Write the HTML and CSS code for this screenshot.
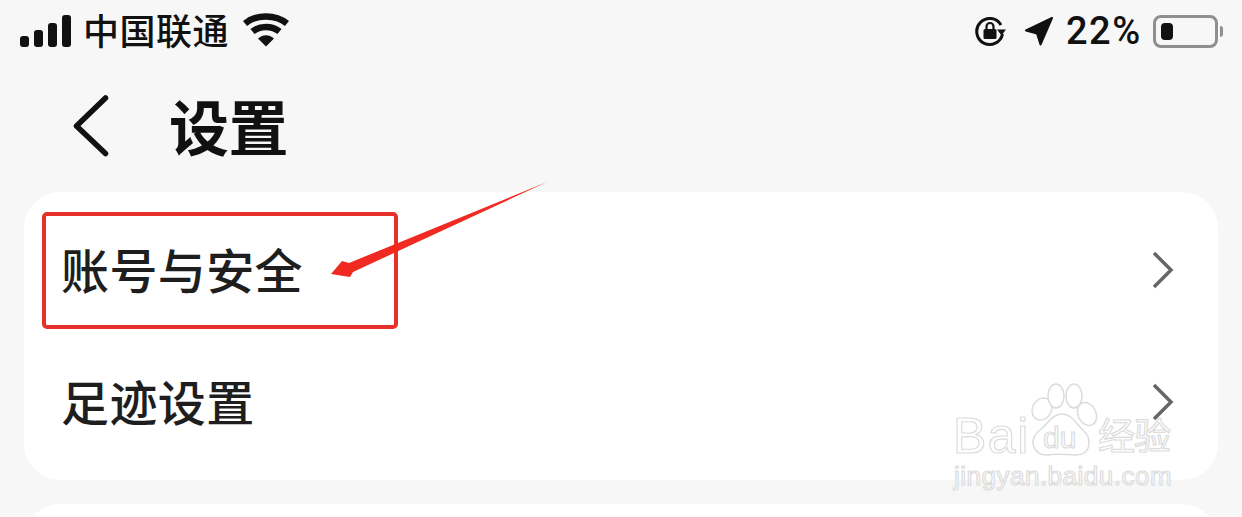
FILE: index.html
```html
<!DOCTYPE html>
<html lang="zh-CN">
<head>
<meta charset="utf-8">
<title>设置</title>
<link rel="stylesheet" href="styles.css">
</head>
<body>
<div class="screen">
  <header class="status">
    <svg class="signal" width="52" height="32" viewBox="0 0 52 32"><rect x="0" y="21" width="9" height="11" rx="3"/><rect x="14" y="15" width="9" height="17" rx="3"/><rect x="28" y="8" width="9" height="24" rx="3"/><rect x="42" y="0" width="9" height="32" rx="3"/></svg>
    <span class="carrier">中国联通</span>
    <svg class="wifi" width="46" height="34" viewBox="0 0 46 34"><path d="M2 10.500C13.500 1 32.500 1 44 10.500" fill="none" stroke="#111" stroke-width="6.500"/><path d="M9.500 18.500C17 12.500 29 12.500 36.500 18.500" fill="none" stroke="#111" stroke-width="6.500"/><path d="M15 25.500C20 21 26 21 31 25.500L23 33.500Z"/></svg>
    <span class="status-right">
      <svg class="lock" width="32" height="32" viewBox="0 0 32 32"><path d="M27 10A13 13 0 1 0 28.500 19" fill="none" stroke="#111" stroke-width="3"/><path d="M23 14.500L32 14.500L27.500 20.500Z"/><rect x="9.500" y="14" width="13" height="10" rx="1.500"/><path d="M12.500 14V11.500A3.500 3.500 0 0 1 19.500 11.500V14" fill="none" stroke="#111" stroke-width="2.200"/></svg>
      <svg class="loc" width="30" height="30" viewBox="0 0 30 30"><path d="M28 2L2 14.500L13 17.500L16.500 28.500Z" stroke="#111" stroke-width="2" stroke-linejoin="round"/></svg>
      <span class="pct">22%</span>
      <span class="battery"><span class="level"></span></span>
      <span class="nub"></span>
    </span>
  </header>
  <nav class="nav">
    <svg class="back" width="40" height="64" viewBox="0 0 40 64"><path d="M33.500 4L4.500 32L33.500 59.500" fill="none" stroke="#111" stroke-width="5.500" stroke-linecap="round" stroke-linejoin="round"/></svg>
    <h1 class="title">设置</h1>
  </nav>
  <section class="card">
    <div class="row row-first">
      <span class="label">账号与安全</span>
      <svg class="chev" width="24" height="40" viewBox="0 0 24 40"><path d="M3 3L20 20L3 37" fill="none" stroke="#666" stroke-width="3.500"/></svg>
    </div>
    <div class="row">
      <span class="label">足迹设置</span>
      <svg class="chev" width="24" height="40" viewBox="0 0 24 40"><path d="M3 3L20 20L3 37" fill="none" stroke="#666" stroke-width="3.500"/></svg>
    </div>
  </section>
  <section class="card card-next"></section>

  <div class="highlight"></div>
  <svg class="arrow" width="230" height="100" viewBox="0 0 230 100"><path d="M228 1L30 82L23 80L12 93L31 96L34 91Z" fill="#f02a20"/></svg>

  <div class="mark">
    <svg class="paw" width="100" height="90" viewBox="0 0 100 90"><g fill="#fff" stroke="#dcdcdc" stroke-width="1.500"><ellipse cx="22" cy="27" rx="9.500" ry="11.500" transform="rotate(30 22 27)"/><ellipse cx="36" cy="14" rx="8" ry="12"/><ellipse cx="54" cy="14" rx="8" ry="12"/><ellipse cx="67" cy="32" rx="9" ry="12" transform="rotate(-25 67 32)"/><path d="M42 32C52 32 56 42 63 48C72 56 72 73 56 73C48 73 36 71 28 73C12 74 8 56 20 48C28 42 32 32 42 32Z"/></g></svg>
    <span class="mark-bai">Bai</span>
    <span class="mark-du">du</span>
    <span class="mark-cn">经验</span>
    <span class="mark-url">jingyan.baidu.com</span>
  </div>
</div>
</body>
</html>
```
FILE: styles.css
```css
* { box-sizing: border-box; }
html, body { margin: 0; height: 100%; overflow: hidden; }
body { background: #f7f7f7; font-family: "Noto Sans CJK SC", "Liberation Sans", sans-serif; color: #111; }
.screen { position: relative; width: 1242px; height: 517px; overflow: hidden; background: #f7f7f7; }

.status { display: flex; align-items: center; height: 62px; padding: 0 19px 0 20px; }
.status svg { flex: none; fill: #111; }
.signal { margin-top: -1px; }
.carrier { margin-left: 11px; margin-top: -4px; font-size: 36px; font-weight: 500; line-height: 62px; letter-spacing: .5px; white-space: nowrap; }
.wifi { margin-left: 14px; margin-top: -3px; }
.status-right { display: flex; align-items: center; margin-left: auto; }
.lock { margin-right: 18px; }
.loc { margin-right: 12px; margin-top: -1px; }
.pct { font-family: Roboto, "Liberation Sans", sans-serif; font-size: 38px; font-weight: 500; line-height: 62px; letter-spacing: 1.500px; width: 87px; }
.battery { display: block; width: 65px; height: 33px; padding: 5px; border: 3px solid #8f8f8f; border-radius: 8px; background: #f7f7f7; }
.level { display: block; width: 12px; height: 100%; border-radius: 4px; background: #111; }
.nub { width: 3px; height: 11px; margin-left: 2px; background: #8f8f8f; border-radius: 0 3px 3px 0; }

.nav { display: flex; align-items: center; height: 130px; padding: 0 0 0 72px; }
.back { flex: none; margin-top: -2px; }
.title { margin: -4px 0 0 57px; font-size: 60px; font-weight: 700; line-height: 130px; letter-spacing: -.5px; }

.card { margin: 0 24px; height: 288px; background: #fff; border-radius: 36px; padding: 12px 0; }
.card-next { margin-top: 24px; height: 120px; }
.row { display: flex; align-items: center; justify-content: space-between; height: 132px; padding: 0 43px 0 37px; }
.label { margin-top: -4px; font-size: 48px; font-weight: 500; line-height: 60px; letter-spacing: .4px; color: #1e1e1e; }
.chev { flex: none; }

.highlight { position: absolute; left: 42px; top: 212px; width: 356px; height: 117px; border: 4px solid #e8302a; border-radius: 5px; }
.arrow { position: absolute; left: 319px; top: 181px; }

.mark { position: absolute; left: 950px; top: 380px; width: 240px; height: 115px; }
.paw { position: absolute; left: 70px; top: 2px; }
.mark span { position: absolute; font-family: "Liberation Sans", sans-serif; color: #fff; -webkit-text-stroke: 1.2px #dcdcdc; line-height: 1; white-space: nowrap; }
.mark-bai { left: 3px; top: 31px; font-size: 50px; letter-spacing: 1.500px; }
.mark-du { left: 93px; top: 43px; font-size: 30px; }
.mark .mark-cn { left: 148px; top: 36px; font-family: "Noto Sans CJK SC", sans-serif; font-size: 37px; letter-spacing: -1px; }
.mark-url { left: 4px; top: 83px; font-size: 26px; letter-spacing: .5px; }
```
